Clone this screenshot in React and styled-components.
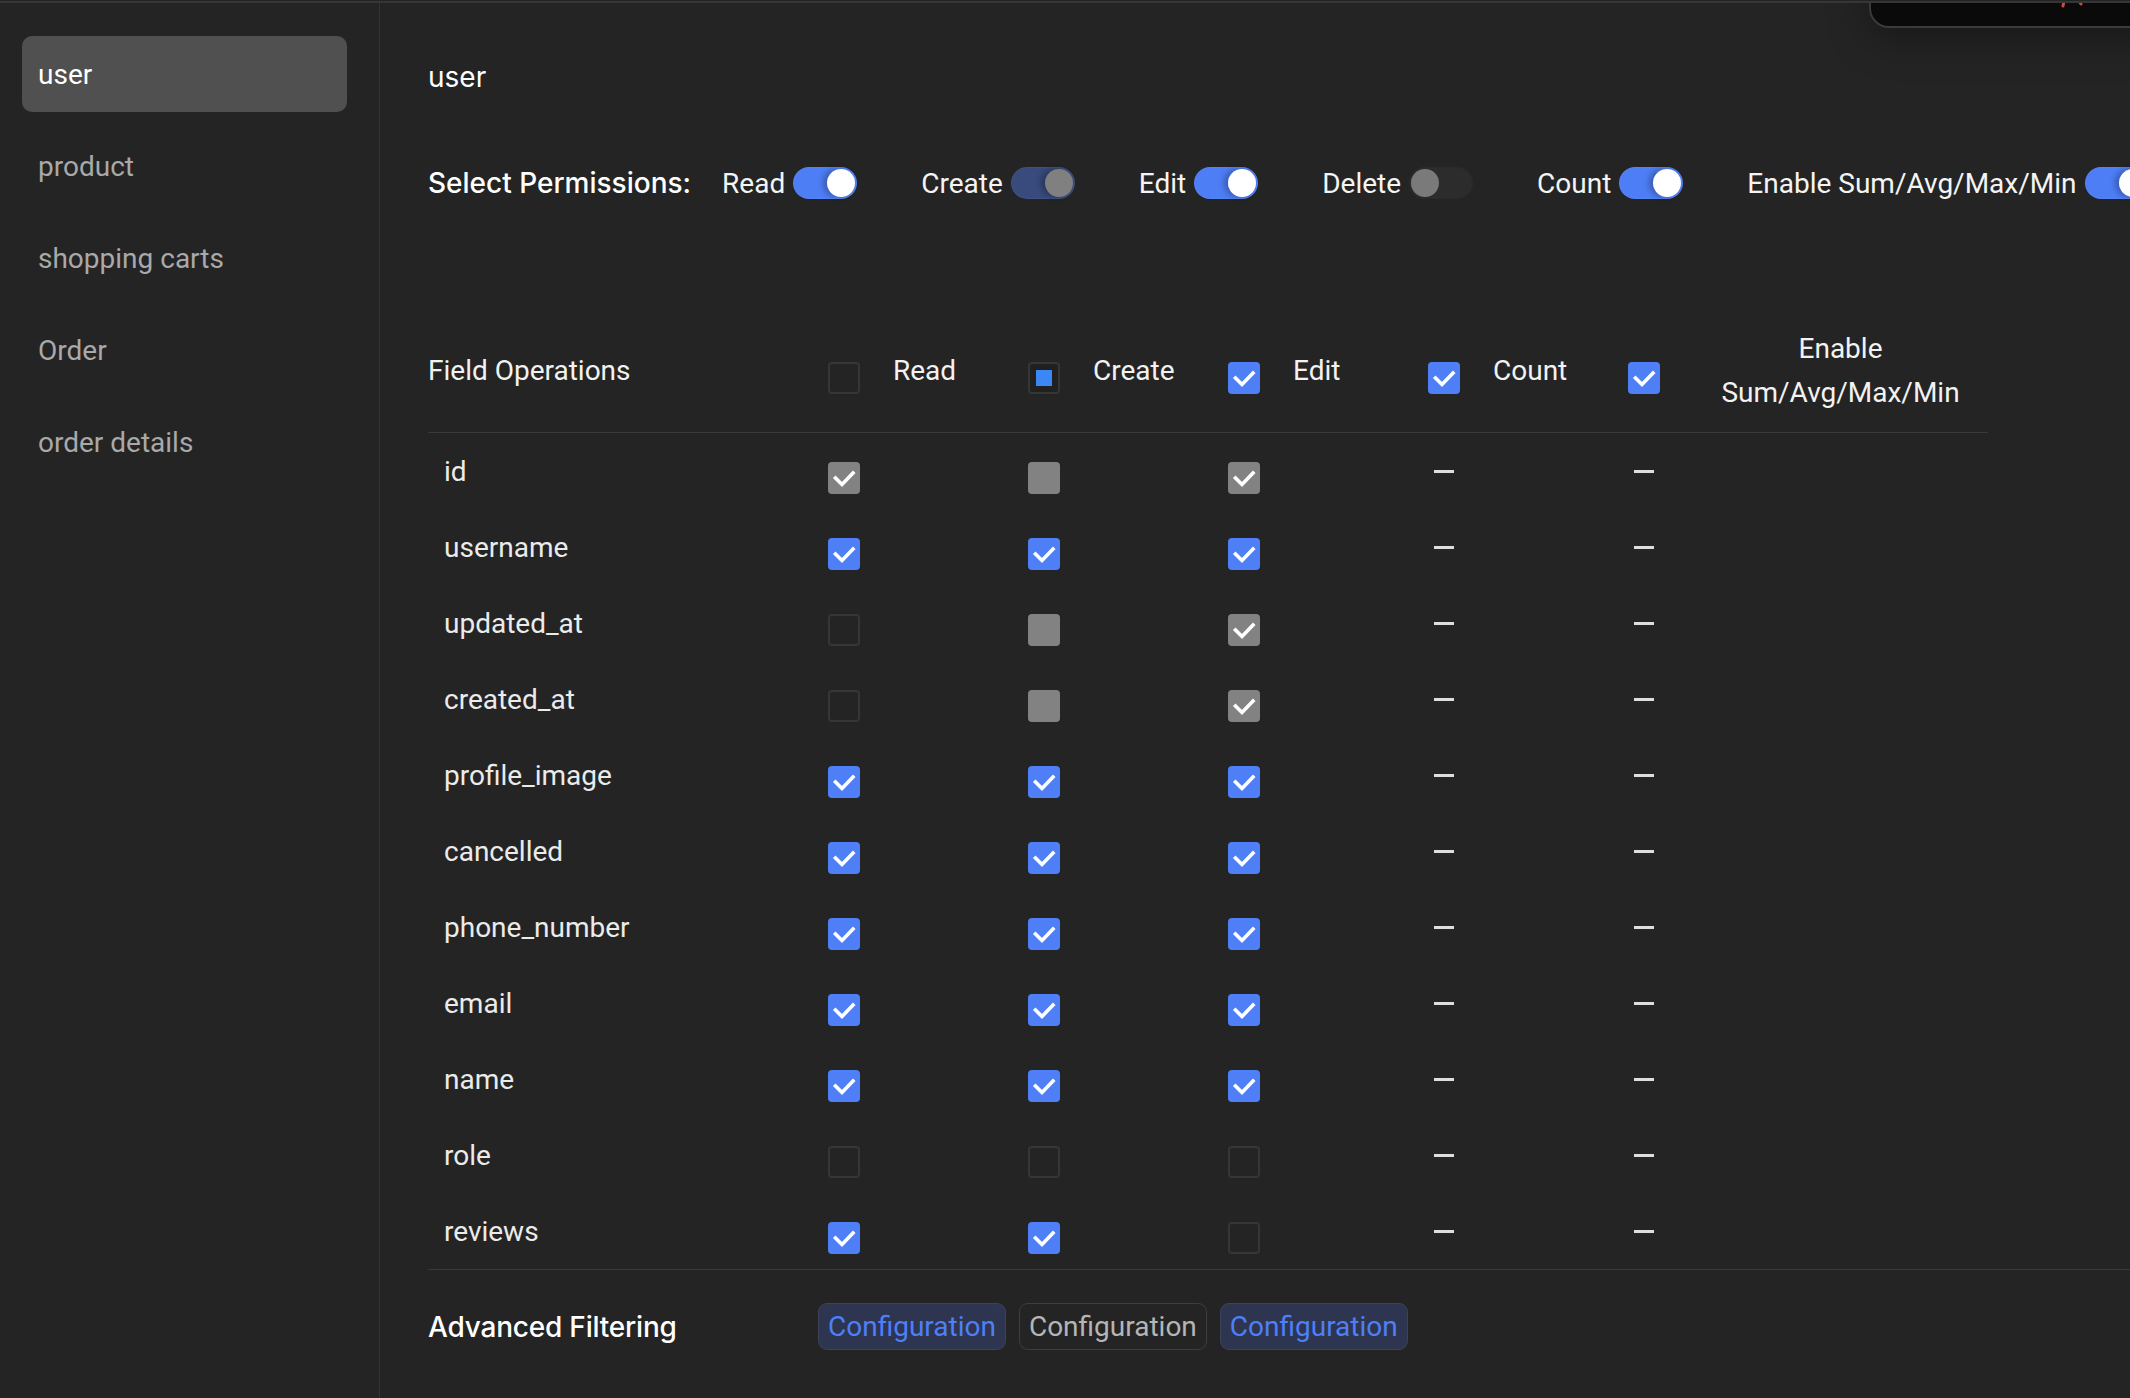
import React from 'react';
import styled, { createGlobalStyle } from 'styled-components';

const GlobalStyle = createGlobalStyle`
  html, body {
    margin: 0;
    padding: 0;
    background: #242424;
    overflow: hidden;
  }
  * {
    box-sizing: border-box;
  }
`;

const Page = styled.div`
  position: relative;
  display: flex;
  min-height: 100vh;
  margin-top: 1px;
  border-top: 2px solid #363636;
  background: #242424;
  overflow: hidden;
`;

const Sidebar = styled.nav`
  flex: 0 0 380px;
  display: flex;
  flex-direction: column;
  gap: 16px;
  padding: 33px 32px 0 22px;
  border-right: 1px solid #343434;
`;

const NavItem = styled.div`
  height: 76px;
  display: flex;
  align-items: center;
  padding-left: 16px;
  border-radius: 10px;
  font-family: Roboto, "Liberation Sans", sans-serif;
  font-size: 28px;
  color: ${p => (p.$active ? '#ffffff' : '#a9a9a9')};
  background: ${p => (p.$active ? '#505050' : 'transparent')};
`;

const Main = styled.main`
  flex: 1;
  min-width: 0;
  padding: 54px 0 0 48px;
  overflow: hidden;
`;

const Title = styled.h1`
  margin: 0;
  font-family: Inter, "Liberation Sans", sans-serif;
  font-size: 28px;
  font-weight: 400;
  line-height: 40px;
  color: #ffffff;
`;

const PermRow = styled.div`
  display: flex;
  align-items: center;
  height: 40px;
  margin-top: 66px;
  white-space: nowrap;
`;

const PermHeading = styled.span`
  font-family: Inter, "Liberation Sans", sans-serif;
  font-size: 28px;
  font-weight: 500;
  color: #ffffff;
  margin-right: 31px;
`;

const PermGroup = styled.div`
  display: flex;
  align-items: center;
  gap: 8px;
  margin-right: 64px;
  flex-shrink: 0;
`;

const PermLabel = styled.span`
  font-family: Roboto, "Liberation Sans", sans-serif;
  font-size: 28px;
  color: #f4f4f4;
`;

const trackColors = {
  on: '#4e7ef6',
  disabled: '#384b7c',
  off: '#2c2c2c',
};

const knobColors = {
  on: '#ffffff',
  disabled: '#808080',
  off: '#7a7a7a',
};

const Toggle = styled.span`
  position: relative;
  flex-shrink: 0;
  width: 64px;
  height: 32px;
  border-radius: 16px;
  background: ${p => trackColors[p.$state]};
  box-shadow: inset 0 0 0 1px ${p => (p.$state === 'off' ? '#2a2a2a' : 'rgba(255,255,255,0.04)')};

  &::after {
    content: '';
    position: absolute;
    top: 2px;
    left: ${p => (p.$state === 'off' ? '2px' : '34px')};
    width: 28px;
    height: 28px;
    border-radius: 50%;
    background: ${p => knobColors[p.$state]};
    box-shadow: ${p => (p.$state === 'off' ? 'none' : '-4px 0 6px rgba(0,0,0,0.28)')};
  }
`;

const FieldTable = styled.div`
  width: 1560px;
  margin-top: 124px;
`;

const HeadRow = styled.div`
  display: grid;
  grid-template-columns: 400px repeat(4, 200px) 360px;
  align-items: center;
  padding-bottom: 17px;
  border-bottom: 1px solid #393939;
`;

const HeadName = styled.div`
  font-family: Roboto, "Liberation Sans", sans-serif;
  font-size: 28px;
  color: #f2f2f2;
  line-height: 44px;
`;

const HeadCell = styled.div`
  display: flex;
  align-items: center;
  min-width: 0;
`;

const HeadLabel = styled.span`
  margin-left: 33px;
  font-family: Roboto, "Liberation Sans", sans-serif;
  font-size: 28px;
  line-height: 44px;
  color: #f2f2f2;
  text-align: center;
`;

const FieldRow = styled.div`
  display: grid;
  grid-template-columns: 400px repeat(4, 200px) 360px;
  align-items: center;
  height: 76px;
`;

const FieldName = styled.div`
  padding-left: 16px;
  font-family: Roboto, "Liberation Sans", sans-serif;
  font-size: 28px;
  color: #ebebeb;
`;

const Cell = styled.div`
  display: flex;
  align-items: center;
`;

const boxBg = {
  checked: '#4f7ff6',
  checkedMuted: '#828282',
  muted: '#828282',
  empty: 'transparent',
  partial: '#202020',
};

const Box = styled.span`
  flex-shrink: 0;
  display: flex;
  align-items: center;
  justify-content: center;
  width: 32px;
  height: 32px;
  margin-top: 14px;
  border-radius: 4px;
  background: ${p => boxBg[p.$variant]};
  border: ${p => (p.$variant === 'empty' || p.$variant === 'partial' ? '2px solid #363636' : 'none')};
`;

const PartialMark = styled.span`
  width: 16px;
  height: 16px;
  background: #3d86f5;
`;

const DashSlot = styled.span`
  display: flex;
  justify-content: center;
  width: 32px;
`;

const Dash = styled.span`
  width: 20px;
  height: 3px;
  background: #dedede;
`;

const FilterSection = styled.div`
  display: grid;
  grid-template-columns: 390px auto;
  align-items: center;
  padding-top: 33px;
  border-top: 1px solid #393939;
`;

const FilterLabel = styled.span`
  font-family: Inter, "Liberation Sans", sans-serif;
  font-size: 28px;
  font-weight: 500;
  letter-spacing: -0.2px;
  color: #ffffff;
`;

const ButtonRow = styled.div`
  display: flex;
  gap: 13px;
`;

const ConfigButton = styled.button`
  height: 47px;
  padding: 0 9px;
  border-radius: 9px;
  font-family: Roboto, "Liberation Sans", sans-serif;
  font-size: 28px;
  line-height: 1;
  cursor: pointer;
  color: ${p => (p.$active ? '#4f7ff6' : '#b5b5b5')};
  background: ${p => (p.$active ? '#2e3550' : '#242424')};
  border: 1px solid ${p => (p.$active ? '#3d4357' : '#3e3e3e')};
`;

const Popover = styled.div`
  position: absolute;
  top: -42px;
  left: 1869px;
  width: 320px;
  height: 67px;
  border-radius: 20px;
  background: #0a0a0a;
  border: 2px solid #3a3a3a;
  box-shadow: 0 10px 40px rgba(0, 0, 0, 0.35);
`;

const PopoverMark = styled.svg`
  position: absolute;
  left: 188px;
  top: 38px;
`;

function Check() {
  return (
    <svg width="32" height="32" viewBox="0 0 32 32">
      <polyline points="7.5,16 14,22.5 25,11" fill="none" stroke="#fff" strokeWidth="3.6" strokeLinecap="square" />
    </svg>
  );
}

function Checkbox({ variant }) {
  return (
    <Box $variant={variant}>
      {(variant === 'checked' || variant === 'checkedMuted') && <Check />}
      {variant === 'partial' && <PartialMark />}
    </Box>
  );
}

const tables = ['user', 'product', 'shopping carts', 'Order', 'order details'];

const perms = [
  { label: 'Read', state: 'on' },
  { label: 'Create', state: 'disabled' },
  { label: 'Edit', state: 'on' },
  { label: 'Delete', state: 'off' },
  { label: 'Count', state: 'on' },
  { label: 'Enable Sum/Avg/Max/Min', state: 'on' },
];

const headCols = [
  { label: 'Read', box: 'empty' },
  { label: 'Create', box: 'partial' },
  { label: 'Edit', box: 'checked' },
  { label: 'Count', box: 'checked' },
  { label: 'Enable Sum/Avg/Max/Min', box: 'checked' },
];

const B = 'checked';
const G = 'checkedMuted';
const M = 'muted';
const E = 'empty';

const fields = [
  { name: 'id', boxes: [G, M, G] },
  { name: 'username', boxes: [B, B, B] },
  { name: 'updated_at', boxes: [E, M, G] },
  { name: 'created_at', boxes: [E, M, G] },
  { name: 'profile_image', boxes: [B, B, B] },
  { name: 'cancelled', boxes: [B, B, B] },
  { name: 'phone_number', boxes: [B, B, B] },
  { name: 'email', boxes: [B, B, B] },
  { name: 'name', boxes: [B, B, B] },
  { name: 'role', boxes: [E, E, E] },
  { name: 'reviews', boxes: [B, B, E] },
];

export default function App() {
  return (
    <>
      <GlobalStyle />
      <Page>
        <Sidebar>
          {tables.map((t, i) => (
            <NavItem key={t} $active={i === 0}>{t}</NavItem>
          ))}
        </Sidebar>

        <Main>
          <Title>user</Title>

          <PermRow>
            <PermHeading>Select Permissions:</PermHeading>
            {perms.map(p => (
              <PermGroup key={p.label}>
                <PermLabel>{p.label}</PermLabel>
                <Toggle $state={p.state} />
              </PermGroup>
            ))}
          </PermRow>

          <FieldTable>
            <HeadRow>
              <HeadName>Field Operations</HeadName>
              {headCols.map(c => (
                <HeadCell key={c.label}>
                  <Checkbox variant={c.box} />
                  <HeadLabel>{c.label}</HeadLabel>
                </HeadCell>
              ))}
            </HeadRow>

            {fields.map(f => (
              <FieldRow key={f.name}>
                <FieldName>{f.name}</FieldName>
                {f.boxes.map((b, i) => (
                  <Cell key={i}>
                    <Checkbox variant={b} />
                  </Cell>
                ))}
                <Cell><DashSlot><Dash /></DashSlot></Cell>
                <Cell><DashSlot><Dash /></DashSlot></Cell>
              </FieldRow>
            ))}
          </FieldTable>

          <FilterSection>
            <FilterLabel>Advanced Filtering</FilterLabel>
            <ButtonRow>
              <ConfigButton $active>Configuration</ConfigButton>
              <ConfigButton>Configuration</ConfigButton>
              <ConfigButton $active>Configuration</ConfigButton>
            </ButtonRow>
          </FilterSection>
        </Main>

        <Popover>
          <PopoverMark width="30" height="8" viewBox="0 0 30 8">
            <line x1="5" y1="0" x2="4" y2="5" stroke="#d4483c" strokeWidth="3" strokeLinecap="round" />
            <line x1="20" y1="0" x2="22" y2="3" stroke="#d4483c" strokeWidth="3" strokeLinecap="round" />
          </PopoverMark>
        </Popover>
      </Page>
    </>
  );
}
